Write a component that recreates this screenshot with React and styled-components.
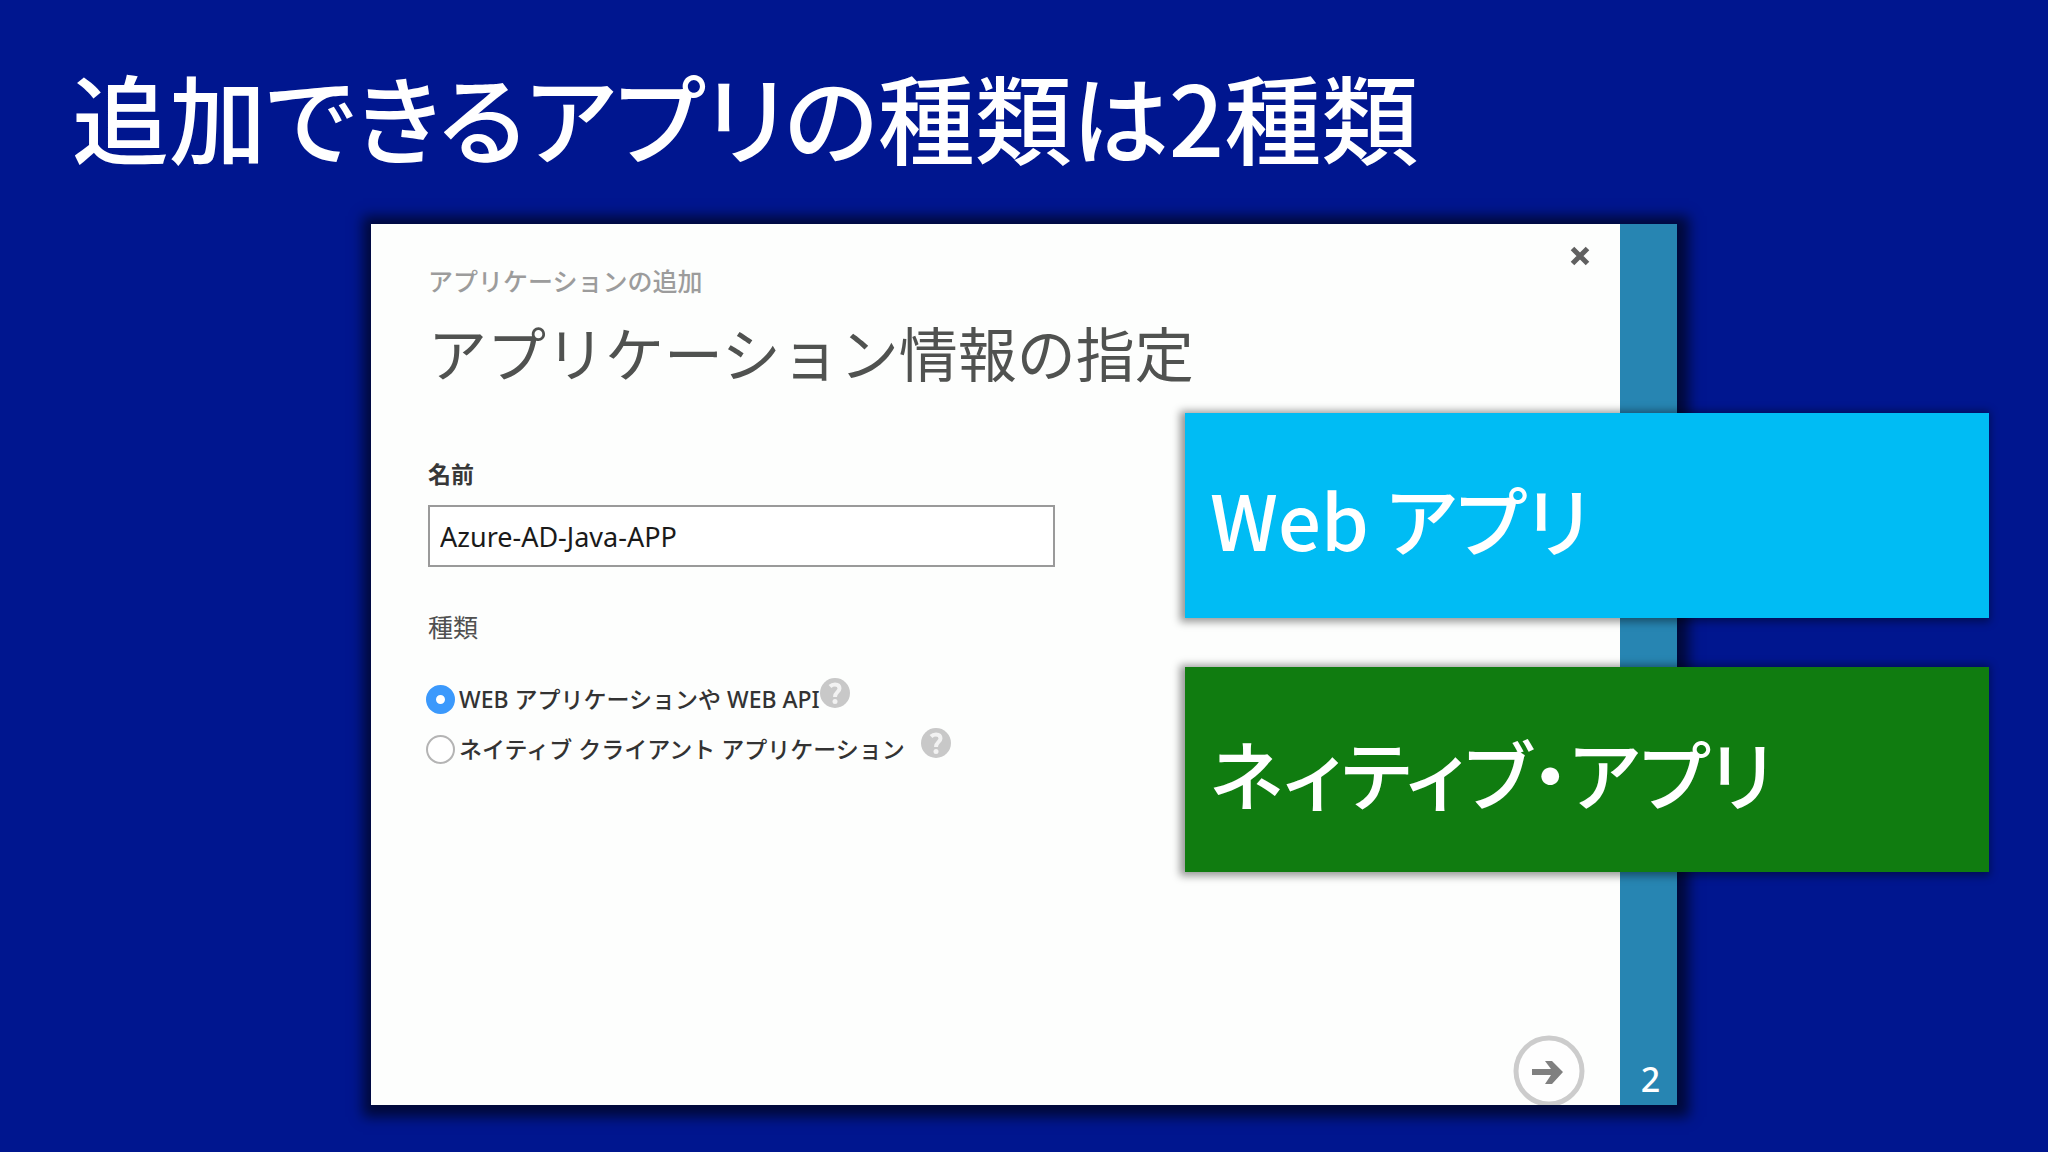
import React from "react";
import styled, { createGlobalStyle } from "styled-components";

const GlobalStyle = createGlobalStyle`
  *, *::before, *::after { box-sizing: border-box; }
  html, body { margin: 0; padding: 0; }
  body {
    background: #00168f;
    font-family: "Noto Sans", "Noto Sans CJK JP", sans-serif;
  }
`;

const Slide = styled.main`
  display: flex;
  flex-direction: column;
  min-height: 100vh;
  padding-bottom: 47px;
  background: #00168f;
`;

const SlideTitle = styled.h1`
  margin: 0;
  padding: 43px 72px 37px;
  color: #ffffff;
  font-family: "Noto Sans CJK JP", sans-serif;
  font-size: 97px;
  font-weight: 500;
  line-height: 144px;
  font-feature-settings: "palt";
`;

const Stage = styled.section`
  position: relative;
  display: flex;
  flex: 1;
  padding: 0 371px;
`;

const Dialog = styled.form`
  display: flex;
  flex: 1;
  background: #fdfefd;
  box-shadow: 2px 2px 12px 10px rgba(0, 0, 0, 0.6);
`;

const DialogBody = styled.div`
  display: flex;
  flex: 1;
  flex-direction: column;
  padding: 0 35px 0 57px;
`;

const DialogTop = styled.header`
  display: flex;
  justify-content: space-between;
  align-items: flex-start;
`;

const Titles = styled.div`
  padding-top: 39px;
`;

const Breadcrumb = styled.p`
  margin: 0;
  color: #9c9c9c;
  font-size: 25px;
  font-weight: 500;
  line-height: 36px;
`;

const DialogTitle = styled.h2`
  margin: 0;
  padding-top: 13px;
  color: #505250;
  font-size: 59px;
  font-weight: 400;
  line-height: 84px;
`;

const IconButton = styled.button`
  display: flex;
  flex: none;
  padding: 0;
  border: 0;
  background: none;
  cursor: pointer;
`;

const CloseButton = styled(IconButton)`
  margin-top: 18px;
  margin-right: -9px;
  padding: 4px;
`;

const Field = styled.div`
  display: flex;
  flex-direction: column;
  padding-top: 60px;
`;

const FieldLabel = styled.label`
  color: #383838;
  font-size: 23px;
  font-weight: 700;
  line-height: 36px;
`;

const TextInput = styled.input`
  width: 627px;
  max-width: 100%;
  height: 62px;
  margin-top: 13px;
  padding: 0 10px;
  border: 2px solid #9a9a9a;
  border-radius: 0;
  background: #ffffff;
  color: #1a1a1a;
  font-family: "Noto Sans", sans-serif;
  font-size: 27px;
`;

const TypeGroup = styled.fieldset`
  min-width: 0;
  margin: 0;
  padding: 0;
  border: 0;
`;

const TypeLegend = styled.legend`
  padding: 42px 0 0;
  color: #505050;
  font-size: 25px;
  line-height: 36px;
`;

const Choices = styled.div`
  display: flex;
  flex-direction: column;
  padding-top: 29px;
`;

const Choice = styled.div`
  display: flex;
  align-items: center;
  height: 50px;
  gap: ${(p) => p.$gap}px;
`;

const ChoiceLabel = styled.label`
  display: flex;
  align-items: center;
  gap: 4px;
  margin-left: -2px;
  color: #333333;
  font-size: 23px;
  font-weight: 500;
  line-height: 36px;
`;

const Radio = styled.input`
  appearance: none;
  width: 29px;
  height: 29px;
  margin: 0;
  border: 2px solid #b4b4b4;
  border-radius: 50%;
  background: #ffffff;

  &:checked {
    border: 10px solid #3b99fc;
  }
`;

const HelpButton = styled(IconButton)`
  align-self: flex-start;
  padding-top: 4px;
`;

const DialogFooter = styled.footer`
  display: flex;
  justify-content: flex-end;
  margin-top: auto;
`;

const StepBar = styled.aside`
  display: flex;
  flex: none;
  align-items: flex-end;
  justify-content: center;
  width: 57px;
  padding-bottom: 2px;
  padding-left: 4px;
  background: #2785b2;
  color: #ffffff;
  font-size: 34px;
  font-weight: 500;
  line-height: 48px;
`;

const Callouts = styled.ul`
  position: absolute;
  top: 189px;
  right: 59px;
  display: flex;
  flex-direction: column;
  gap: 49px;
  width: 804px;
  margin: 0;
  padding: 0;
  list-style: none;
`;

const Callout = styled.li`
  padding: 51px 25px 46px;
  background: ${(p) => p.$color};
  box-shadow: -2px 1px 8px 3px rgba(0, 0, 0, 0.4);
  color: #ffffff;
  font-family: "Noto Sans CJK JP", sans-serif;
  font-size: 76px;
  font-weight: 500;
  line-height: 108px;
  font-feature-settings: "palt";
`;

const CloseIcon = () => (
  <svg width="20" height="20" viewBox="0 0 20 20" aria-hidden="true">
    <path d="M2.5 2.5 17.5 17.5M17.5 2.5 2.5 17.5" stroke="#606060" strokeWidth="5" fill="none" />
  </svg>
);

const NextIcon = () => (
  <svg width="72" height="70" viewBox="0 0 72 70" aria-hidden="true">
    <circle cx="36" cy="36" r="33" fill="#fefefe" stroke="#cccccc" strokeWidth="5" />
    <path d="M19 34H38L32 26H39L50 37L39 49H32L38 40H19Z" fill="#808080" />
  </svg>
);

const HelpIcon = () => (
  <svg width="30" height="30" viewBox="0 0 30 30" aria-hidden="true">
    <circle cx="15" cy="15" r="15" fill="#c8c8c8" />
    <path
      d="M10 8.5C11.5 7 13 6.5 15 6.5C18 6.5 19.5 8 19.5 10.5C19.5 14 15 14 15 19"
      fill="none"
      stroke="#f2f2f2"
      strokeWidth="4"
    />
    <circle cx="15" cy="23.5" r="2.5" fill="#f2f2f2" />
  </svg>
);

const choices = [
  { id: "web", label: "WEB アプリケーションや WEB API", gap: 0, checked: true },
  { id: "native", label: "ネイティブ クライアント アプリケーション", gap: 16 },
];

const callouts = [
  { text: "Web アプリ", color: "#00bcf4" },
  { text: "ネィティブ・アプリ", color: "#107c10" },
];

export default function App() {
  return (
    <>
      <GlobalStyle />
      <Slide lang="ja">
        <SlideTitle>追加できるアプリの種類は2種類</SlideTitle>
        <Stage>
          <Dialog onSubmit={(e) => e.preventDefault()}>
            <DialogBody>
              <DialogTop>
                <Titles>
                  <Breadcrumb>アプリケーションの追加</Breadcrumb>
                  <DialogTitle>アプリケーション情報の指定</DialogTitle>
                </Titles>
                <CloseButton type="button" aria-label="閉じる">
                  <CloseIcon />
                </CloseButton>
              </DialogTop>
              <Field>
                <FieldLabel htmlFor="app-name">名前</FieldLabel>
                <TextInput id="app-name" type="text" defaultValue="Azure-AD-Java-APP" />
              </Field>
              <TypeGroup>
                <TypeLegend>種類</TypeLegend>
                <Choices>
                  {choices.map((c) => (
                    <Choice key={c.id} $gap={c.gap}>
                      <ChoiceLabel htmlFor={c.id}>
                        <Radio id={c.id} type="radio" name="app-type" defaultChecked={c.checked} />
                        {c.label}
                      </ChoiceLabel>
                      <HelpButton type="button" aria-label="ヘルプ">
                        <HelpIcon />
                      </HelpButton>
                    </Choice>
                  ))}
                </Choices>
              </TypeGroup>
              <DialogFooter>
                <IconButton type="submit" aria-label="次へ">
                  <NextIcon />
                </IconButton>
              </DialogFooter>
            </DialogBody>
            <StepBar>2</StepBar>
          </Dialog>
          <Callouts>
            {callouts.map((c) => (
              <Callout key={c.text} $color={c.color}>
                {c.text}
              </Callout>
            ))}
          </Callouts>
        </Stage>
      </Slide>
    </>
  );
}
